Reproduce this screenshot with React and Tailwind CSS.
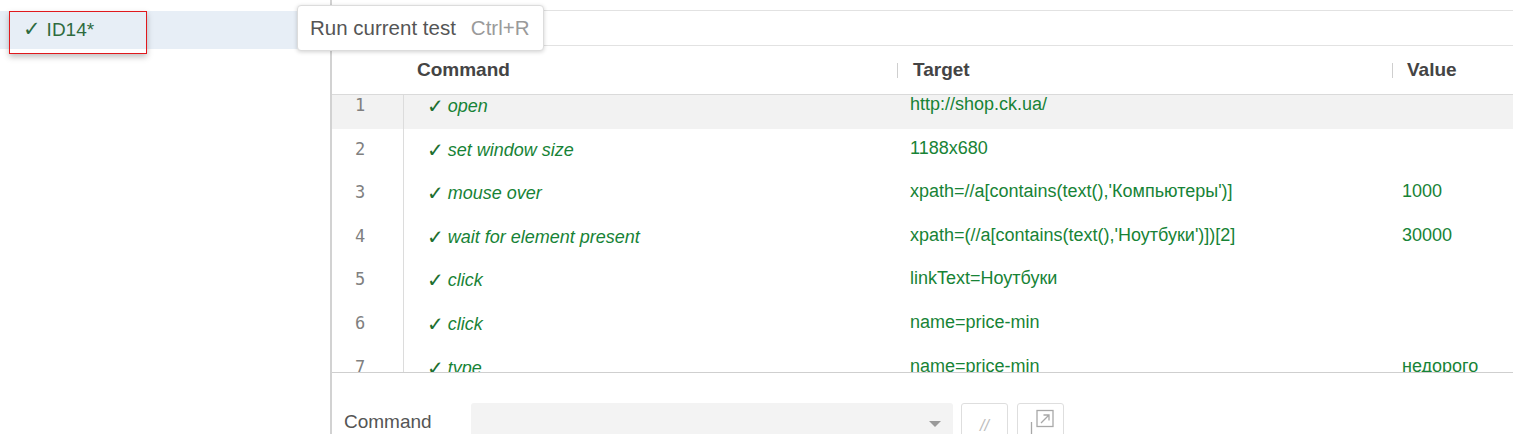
import React from "react";

const rows = [
  { n: 1, cmd: "open", target: "http://shop.ck.ua/", value: "" },
  { n: 2, cmd: "set window size", target: "1188x680", value: "" },
  { n: 3, cmd: "mouse over", target: "xpath=//a[contains(text(),'Компьютеры')]", value: "1000" },
  { n: 4, cmd: "wait for element present", target: "xpath=(//a[contains(text(),'Ноутбуки')])[2]", value: "30000" },
  { n: 5, cmd: "click", target: "linkText=Ноутбуки", value: "" },
  { n: 6, cmd: "click", target: "name=price-min", value: "" },
  { n: 7, cmd: "type", target: "name=price-min", value: "недорого" },
];

const sans = "font-['Liberation_Sans','DejaVu_Sans',Arial,sans-serif]";

const Row = ({ row }) => (
  <div
    className={`grid grid-cols-[72px_493px_495px_1fr] items-start h-[43.6px] ${
      row.n === 1 ? "bg-[linear-gradient(to_bottom,#f2f2f2_34px,transparent_34px)]" : ""
    }`}
  >
    <div className="self-stretch border-r border-[#dcdcdc] pl-[23px] font-['DejaVu_Sans_Mono',monospace] text-[17px] leading-[20px] text-[#808080]">
      {row.n}
    </div>
    <div className="h-[22px] pl-[23px] flex items-center text-[18px] text-[#178336] italic whitespace-nowrap">
      <span className="not-italic font-['DejaVu_Sans',sans-serif] font-bold text-[20px] leading-[22px] text-[#1d6f2f] mr-[4px]">✓</span>
      <span className="leading-[22px]">{row.cmd}</span>
    </div>
    <div className="pl-[13px] text-[18px] leading-[18px] text-[#178336] whitespace-nowrap">{row.target}</div>
    <div className="pl-[10px] text-[18px] leading-[18px] text-[#178336] whitespace-nowrap">{row.value}</div>
  </div>
);

export default function App() {
  return (
    <div className={`relative flex w-[1513px] h-[434px] overflow-hidden bg-white ${sans}`}>
      {/* sidebar */}
      <aside className="w-[330px] shrink-0 pt-[11px]">
        <div className="h-[38px] bg-[#e7eef6] flex items-center pl-[23px] text-[19px] text-[#2e6b3e]">
          <span className="font-['DejaVu_Sans',sans-serif] font-bold text-[21px] mr-[6px]">✓</span>
          <span>ID14*</span>
        </div>
      </aside>

      {/* main */}
      <main className="flex-1 flex flex-col border-l-2 border-[#d2d2d2]">
        <div className="h-[11px] shrink-0 border-b border-[#e2e2e2]" />
        <div className="h-[35px] shrink-0 border-b border-[#e2e2e2]" />

        <div className="h-[49px] shrink-0 border-b border-[#dadada] grid grid-cols-[72px_493px_495px_1fr] items-center text-[19px] font-bold text-[#444]">
          <div />
          <div className="pl-[13px]">Command</div>
          <div className="flex items-center">
            <span className="w-px h-[15px] bg-[#cfcfcf]" />
            <span className="ml-[15px]">Target</span>
          </div>
          <div className="flex items-center">
            <span className="w-px h-[15px] bg-[#cfcfcf]" />
            <span className="ml-[14px]">Value</span>
          </div>
        </div>

        <div className="h-[278px] shrink-0 overflow-hidden border-b border-[#cfcfcf]">
          {rows.map((r) => (
            <Row key={r.n} row={r} />
          ))}
        </div>

        <div className="flex items-start pt-[30px] pl-[12px]">
          <span className="mt-[5px] w-[127px] text-[19px] text-[#555]">Command</span>
          <div className="w-[482px] h-[40px] bg-[#f3f3f3] rounded-t-[3px] flex justify-end pr-[12px] pt-[18px]">
            <span className="w-0 h-0 border-l-[6px] border-r-[6px] border-t-[6px] border-l-transparent border-r-transparent border-t-[#9a9a9a]" />
          </div>
          <button className="ml-[8px] w-[47px] h-[40px] border border-[#dedede] rounded-[3px] flex justify-center pt-[10px] text-[16px] italic text-[#bcbcbc]">
            //
          </button>
          <button className="ml-[9px] w-[47px] h-[40px] border border-[#dedede] rounded-[3px] flex justify-center pt-[4px]">
            <svg width="30" height="30" viewBox="0 0 30 30" fill="none" stroke="#a8a8a8" strokeWidth="1.3">
              <rect x="11" y="2.5" width="16" height="16" />
              <path d="M15 15 L23 7 M17.5 7 H23 V12.5" />
              <path d="M5.5 14 V30" />
            </svg>
          </button>
        </div>
      </main>

      {/* tooltip */}
      <div className="absolute left-[297px] top-[5px] h-[46px] flex items-center pl-[12px] pr-[13px] bg-white border border-[#dcdcdc] rounded-[4px] shadow-[0_1px_4px_rgba(0,0,0,0.18)] text-[20.5px] whitespace-nowrap">
        <span className="text-[#555]">Run current test</span>
        <span className="ml-[15px] text-[#9a9a9a]">Ctrl+R</span>
      </div>

      {/* highlight frame */}
      <div className="absolute left-[9px] top-[11px] w-[138px] h-[43px] border border-[#e0191d] shadow-[0_3px_6px_rgba(0,0,0,0.25)]" />
    </div>
  );
}
